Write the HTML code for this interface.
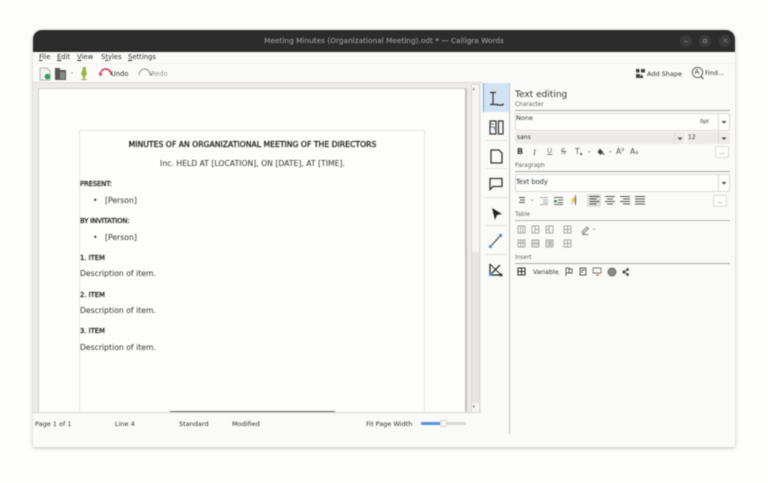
<!DOCTYPE html>
<html><head><meta charset="utf-8">
<style>
html,body{margin:0;padding:0;width:768px;height:483px;overflow:hidden;background:#fdfdfc;font-family:"DejaVu Sans","Liberation Sans",sans-serif;color:#2e3436}
#w{position:absolute;left:0;top:0;width:768px;height:483px;filter:blur(.4px)}
.a{position:absolute}
.t{position:absolute;white-space:nowrap;line-height:1}
.b{-webkit-text-stroke:.3px #222;color:#222}
svg{position:absolute;overflow:visible}
.line{position:absolute;background:#a9a8a5;height:1px}
.box{position:absolute;box-sizing:border-box;border:1px solid #dcdad6;border-radius:2px;background:#fdfdfc}
</style></head><body><div id="w">
<div class="a" style="left:33px;top:30px;width:702px;height:417px;background:#fafaf8;border-radius:9px 9px 0 0;box-shadow:0 1px 4px rgba(0,0,0,.25)"></div>
<div class="a" style="left:33px;top:30px;width:702px;height:22px;background:#2c2c2c;border-radius:9px 9px 0 0"></div>
<div class="t" style="left:33px;width:702px;text-align:center;top:36.500px;font-size:7.350px;color:#8b8b8b;-webkit-text-stroke:.25px #8b8b8b">Meeting Minutes (Organizational Meeting).odt * — Calligra Words</div>
<div class="a" style="left:680px;top:35px;width:12px;height:12px;border-radius:6px;background:#3a3a3a"></div>
<div class="a" style="left:699px;top:35px;width:12px;height:12px;border-radius:6px;background:#3a3a3a"></div>
<div class="a" style="left:719px;top:35px;width:12px;height:12px;border-radius:6px;background:#3a3a3a"></div>
<div class="a" style="left:684px;top:41px;width:4px;height:1px;background:#777"></div>
<div class="a" style="left:703px;top:39px;width:4px;height:4px;border:1px solid #777;box-sizing:border-box"></div>
<div class="t" style="left:722px;top:37px;font-size:8px;color:#777">×</div>

<div class="t" style="left:39px;top:53.500px;font-size:6.800px"><u>F</u>ile</div>
<div class="t" style="left:57px;top:53.500px;font-size:6.800px"><u>E</u>dit</div>
<div class="t" style="left:77px;top:53.500px;font-size:6.800px"><u>V</u>iew</div>
<div class="t" style="left:101px;top:53.500px;font-size:6.800px">S<u>t</u>yles</div>
<div class="t" style="left:128px;top:53.500px;font-size:6.800px"><u>S</u>ettings</div>
<div class="a" style="left:33px;top:63px;width:702px;height:1px;background:#efeeeb"></div>

<svg style="left:0;top:0" width="768" height="483">
<path d="M40 68h7l3 3v9h-10z" fill="#f3f3f1" stroke="#b5b5b2" stroke-width="1"/>
<circle cx="47.500" cy="76.500" r="2.800" fill="#2e9e4f"/>
<path d="M55 68h5v2h6v10H55z" fill="#555753"/><rect x="60" y="72" width="5" height="7" fill="#888a85"/>
<path d="M70.500 72.500h3l-1.500 1.500z" fill="#aaa"/>
<path d="M83 67h3v4l1 3-2 3v2h2v1h-6v-1h2v-2l-2-3 1-3z" fill="#9ab84a"/>
<path d="M100 75c1-5 3-6 5.500-6s5 1.500 6 6" fill="none" stroke="#e0304a" stroke-width="1.500"/>
<path d="M98.500 73l2 3.500 2-2.500z" fill="#e0304a"/>
<path d="M139 75c1-5 3-6 5.500-6s5 1.500 6 6" fill="none" stroke="#8d8d8b" stroke-width="1"/>
<path d="M149 74.500l2.500 1.500 1-2.500z" fill="#8d8d8b"/>
<path d="M636 69h3.500v3.500H636zM641 69h4v3.500h-4zM636 74h4v4h-4zM641.500 74l2 4h-4z" fill="#3f4244"/>
<circle cx="697.500" cy="72.500" r="5.200" fill="#fafaf8" stroke="#555" stroke-width=".9"/>
<path d="M701 76.500l2.500 2.500" stroke="#555" stroke-width="1.200"/>
</svg>
<div class="t" style="left:111px;top:70.500px;font-size:6.600px;color:#2e3436">Undo</div>
<div class="t" style="left:151px;top:70.500px;font-size:6.600px;color:#9a9a98">Redo</div>
<div class="t" style="left:647px;top:70.500px;font-size:6.500px">Add Shape</div>
<div class="t" style="left:705px;top:70.500px;font-size:6.300px">Find...</div>
<div class="t" style="left:694.500px;top:69px;font-size:7px">A</div>

<!-- document area -->
<div class="a" style="left:33px;top:82px;width:449px;height:1px;background:#dcdbd8"></div>
<div class="a" style="left:33px;top:83px;width:448px;height:329px;background:#ecebe8"></div>
<div class="a" style="left:38px;top:88px;width:429px;height:324px;background:#fdfdfb;border:1px solid #d0cfcc;border-right:2px solid #c4c3c0;border-bottom:0;box-sizing:border-box;border-radius:1px"></div>
<div class="a" style="left:79px;top:130px;width:346px;height:282px;border:1px solid #e8e7e4;border-bottom:0;box-sizing:border-box"></div>
<div class="a" style="left:471px;top:84px;width:9px;height:328px;background:#e6e5e2;border:1px solid #dad9d6;box-sizing:border-box"></div>
<div class="a" style="left:472px;top:85px;width:7px;height:167px;background:#f6f6f4"></div>
<div class="t" style="left:472.500px;top:87px;font-size:5px;color:#888">▴</div>
<div class="a" style="left:472px;top:403px;width:7px;height:9px;background:#f6f6f4"></div>
<div class="t" style="left:472.500px;top:405px;font-size:5px;color:#888">▾</div>

<div class="t b" style="left:80px;width:345px;text-align:center;top:141px;font-size:7.700px">MINUTES OF AN ORGANIZATIONAL MEETING OF THE DIRECTORS</div>
<div class="t" style="left:80px;width:345px;text-align:center;top:160px;font-size:7.700px;color:#333">Inc. HELD AT [LOCATION], ON [DATE], AT [TIME].</div>
<div class="t b" style="left:80px;top:181px;font-size:6.800px;letter-spacing:-.1px">PRESENT:</div>
<div class="t" style="left:93px;top:197px;font-size:7.700px;color:#333">•</div>
<div class="t" style="left:105px;top:197px;font-size:7.700px;color:#333">[Person]</div>
<div class="t b" style="left:80px;top:218px;font-size:6.800px;letter-spacing:-.1px">BY INVITATION:</div>
<div class="t" style="left:93px;top:234px;font-size:7.700px;color:#333">•</div>
<div class="t" style="left:105px;top:234px;font-size:7.700px;color:#333">[Person]</div>
<div class="t b" style="left:80px;top:255px;font-size:6.800px">1. ITEM</div>
<div class="t" style="left:80px;top:270px;font-size:7.700px;color:#333">Description of item.</div>
<div class="t b" style="left:80px;top:292px;font-size:6.800px">2. ITEM</div>
<div class="t" style="left:80px;top:307px;font-size:7.700px;color:#333">Description of item.</div>
<div class="t b" style="left:80px;top:328px;font-size:6.800px">3. ITEM</div>
<div class="t" style="left:80px;top:344px;font-size:7.700px;color:#333">Description of item.</div>

<!-- status bar -->
<div class="a" style="left:33px;top:412px;width:448px;height:1px;background:#d8d7d4"></div>
<div class="a" style="left:170px;top:411px;width:165px;height:1px;background:#666"></div>
<div class="t" style="left:35px;top:421px;font-size:6.500px">Page 1 of 1</div>
<div class="t" style="left:115px;top:421px;font-size:6.500px">Line 4</div>
<div class="t" style="left:179px;top:421px;font-size:6.500px">Standard</div>
<div class="t" style="left:232px;top:421px;font-size:6.500px">Modified</div>
<div class="t" style="left:366px;top:421px;font-size:6.500px">Fit Page Width</div>
<div class="a" style="left:421px;top:422px;width:45px;height:3px;background:#d8d7d4;border-radius:1px"></div>
<div class="a" style="left:421px;top:422px;width:22px;height:3px;background:#5b93d8;border-radius:1px"></div>
<div class="a" style="left:440px;top:420px;width:7px;height:7px;background:#fbfbfa;border:1px solid #d4d3d0;box-sizing:border-box;border-radius:2px"></div>
<div class="a" style="left:509px;top:83px;width:1px;height:351px;background:#c4c3c0"></div>

<!-- tool strip -->
<div class="a" style="left:483px;top:83px;width:26px;height:29px;background:#d3e3f6;border-left:1px solid #6ea3e0;box-sizing:border-box"></div>
<div class="a" style="left:485px;top:140px;width:22px;height:1px;background:#e2e1de"></div>
<div class="a" style="left:485px;top:168px;width:22px;height:1px;background:#e2e1de"></div>
<div class="a" style="left:485px;top:197px;width:22px;height:1px;background:#e2e1de"></div>
<div class="a" style="left:485px;top:225px;width:22px;height:1px;background:#e2e1de"></div>
<div class="a" style="left:485px;top:254px;width:22px;height:1px;background:#e2e1de"></div>
<svg style="left:0;top:0" width="768" height="483" fill="none" stroke="#333" stroke-width="1.200">
<path d="M490 92.500h6M490 104.500h6M493 92.500v12M497 103.500v1.500h6v-1.500"/>
<path d="M490 121h6v13h-6zM498.500 121h4.500v13h-4.500z"/><path d="M490 124h4M490 127h4" stroke-width=".8"/><rect x="494" y="127" width="2" height="3" fill="#4a90d9" stroke="none"/>
<path d="M491 150h8l3 3v10h-11z" stroke-width="1.300"/>
<path d="M490 178.500h12v8h-9l-3 3z" stroke-width="1.300"/>
<path d="M492 208l10 6-5 1-2 5z" fill="#222" stroke="none"/>
<path d="M491 246l9-10" stroke-width="1"/><rect x="489" y="245" width="3" height="3" fill="#4a90d9" stroke="none"/><rect x="499" y="234" width="3" height="3" fill="#4a90d9" stroke="none"/>
<path d="M490 275l10-10M490 264v11h11" stroke-width="1.400"/><path d="M490 264l11 11" stroke-width="1"/><rect x="489" y="273" width="3" height="3" fill="#4a90d9" stroke="none"/><circle cx="501" cy="275" r="1.500" fill="#333" stroke="none"/>
</svg>

<!-- side panel -->
<div class="t" style="left:515px;top:91px;font-size:9px;color:#333">Text editing</div>
<div class="t" style="left:515px;top:102.500px;font-size:5.800px;color:#666">Character</div>
<div class="line" style="left:515px;top:110px;width:215px"></div>
<div class="box" style="left:515px;top:113px;width:215px;height:18px"></div>
<div class="a" style="left:718px;top:113px;width:1px;height:18px;background:#dcdad6"></div>
<div class="t" style="left:516px;top:115px;font-size:6.500px">None</div>
<div class="t" style="left:700px;top:119.500px;font-size:5.300px">0pt</div>
<div class="a" style="left:515px;top:132px;width:170px;height:12px;background:#ecebe8;border-radius:2px"></div>
<div class="a" style="left:674px;top:132px;width:1px;height:12px;background:#dcdad6"></div>
<div class="t" style="left:517px;top:135px;font-size:6px">sans</div>
<div class="a" style="left:687px;top:132px;width:43px;height:12px;background:#ecebe8;border-radius:2px"></div>
<div class="a" style="left:718px;top:132px;width:1px;height:12px;background:#dcdad6"></div>
<div class="t" style="left:688px;top:135px;font-size:6px">12</div>

<div class="t" style="left:517px;top:148px;font-size:8px;font-weight:bold">B</div>
<div class="t" style="left:533px;top:148px;font-size:8.500px;font-style:italic;font-family:'Liberation Serif',serif;color:#555">I</div>
<div class="t" style="left:547px;top:148px;font-size:7px;text-decoration:underline;color:#777">U</div>
<div class="t" style="left:561px;top:148px;font-size:8px;text-decoration:line-through;color:#777">S</div>
<div class="t" style="left:575px;top:148px;font-size:7.500px;color:#555">T</div>
<div class="a" style="left:580px;top:153px;width:2px;height:2px;background:#555"></div>
<div class="t" style="left:616px;top:148px;font-size:7.500px;color:#555">A<span style="font-size:5px;vertical-align:3px">a</span></div>
<div class="t" style="left:630px;top:148px;font-size:7.500px;color:#555">A<span style="font-size:5px">a</span></div>
<svg style="left:0;top:0" width="768" height="483">
<path d="M600 148.500l3.500 4-3 2.500-3-3zM603.500 153l1 2-2-.2z" fill="#444"/>
<path d="M587.500 151h3.500l-1.800 2zM608.500 151h3.500l-1.800 2z" fill="#bbb"/>
</svg>
<div class="box" style="left:715px;top:146px;width:14px;height:12px;text-align:center;font-size:6px;line-height:12px;color:#555">...</div>

<div class="t" style="left:515px;top:164px;font-size:5.800px;color:#666">Paragraph</div>
<div class="line" style="left:515px;top:171px;width:215px"></div>
<div class="box" style="left:515px;top:174px;width:215px;height:18px"></div>
<div class="a" style="left:718px;top:174px;width:1px;height:18px;background:#dcdad6"></div>
<div class="t" style="left:516px;top:178.500px;font-size:6.600px">Text body</div>
<svg style="left:0;top:0" width="768" height="483">
<path d="M721.500 121h5l-2.500 2.500zM677.500 137.500h5l-2.500 2.500zM721.500 137.500h5l-2.500 2.500zM721.500 182h5l-2.500 2.500z" fill="#444"/>
</svg>

<div class="a" style="left:587px;top:194px;width:14px;height:13px;background:#e0dfdc;border-radius:2px"></div>
<svg style="left:0;top:0" width="768" height="483" fill="none" stroke="#666" stroke-width=".9">
<path d="M519 197.500h6M520 200h5M519 202.500h6" stroke="#555"/>
<path d="M530.500 199.500h3.500l-1.800 2z" fill="#bbb" stroke="none"/>
<path d="M540 197.500h8M543 200h5M543 202.500h5M540 204.500h8" stroke="#aaa"/>
<path d="M554 197.500h9M558 200h5M558 202.500h5M554 204.500h9"/><rect x="554" y="200" width="3" height="2.500" fill="#2e9e4f" stroke="none"/>
<circle cx="574" cy="200" r="2.600" fill="#e8d04a" stroke="none"/><path d="M575.500 195v10" stroke="#555"/><path d="M570 203h3" stroke="#bbb"/>
<path d="M589.500 196.500h10M589.500 199h7M589.500 201.500h10M589.500 204h7" stroke="#555"/>
<path d="M605 196.500h10M607 199h6M605 201.500h10M607 204h6" stroke="#555"/>
<path d="M620 196.500h10M623 199h7M620 201.500h10M623 204h7" stroke="#555"/>
<path d="M635 196.500h10M635 199h10M635 201.500h10M635 204h10" stroke="#555"/>
</svg>
<div class="box" style="left:713px;top:195px;width:14px;height:12px;text-align:center;font-size:6px;line-height:12px;color:#555">...</div>

<div class="t" style="left:515px;top:213px;font-size:5.800px;color:#666">Table</div>
<div class="line" style="left:515px;top:220px;width:215px;background:#b5b4b1"></div>
<svg style="left:0;top:0" width="768" height="483" fill="none" stroke="#a5a5a3" stroke-width=".9">
<path d="M518 226h7v7h-7zM520.500 226v7M522.800 226v7"/>
<path d="M532 226h7v7h-7zM535 226v7M535 229.500h4"/>
<path d="M546 226h7v7h-7zM549 226v7M546 229.500h3"/>
<path d="M564 226h7v7h-7zM567.500 226v7M564 229.500h7"/>
<path d="M582 232l5-5 1.500 1.500-5 5zM582 234.500h6" stroke="#777"/>
<path d="M592.500 228.500h3.500l-1.800 2z" fill="#bbb" stroke="none"/>
<path d="M518 240h7v7h-7zM518 243h7M520.500 240v7M522.800 240v7"/>
<path d="M532 240h7v7h-7zM532 243.500h7" fill="#dcdcda"/>
<path d="M546 240h7v7h-7zM549 242h2v3h-2z" fill="#dcdcda"/>
<path d="M564 240h7v7h-7zM567.500 240v7M564 243.500h7"/>
</svg>

<div class="t" style="left:515px;top:256px;font-size:5.800px;color:#666">Insert</div>
<div class="line" style="left:515px;top:263px;width:215px"></div>
<svg style="left:0;top:0" width="768" height="483" fill="none" stroke="#555" stroke-width=".9">
<path d="M518 268h7v7h-7zM518 271.500h7M521.500 268v7" stroke="#333" stroke-width="1.100"/>
<path d="M557.500 274h2l-1 1z" fill="#888" stroke="none"/>
<path d="M566 276v-8h3v5h-3M569 269h3v4h-3" />
<path d="M580 268h6v7h-6zM581 270h4M581 272h2" />
<path d="M593 268h8v5h-8z" stroke="#777"/><path d="M596 275h3" stroke="#d88a20" stroke-width="1.500"/>
<circle cx="612" cy="272" r="4" fill="#8a8a88" stroke="#666"/>
<path d="M624 272l3-2.500M624 272l3 2.500" /><circle cx="624" cy="272" r="1.200" fill="#444"/><circle cx="627.500" cy="269.500" r="1" fill="#444"/><circle cx="627.500" cy="274.500" r="1" fill="#444"/>
</svg>
<div class="t" style="left:533px;top:269.500px;font-size:6.300px">Variable</div>
</div></body></html>
